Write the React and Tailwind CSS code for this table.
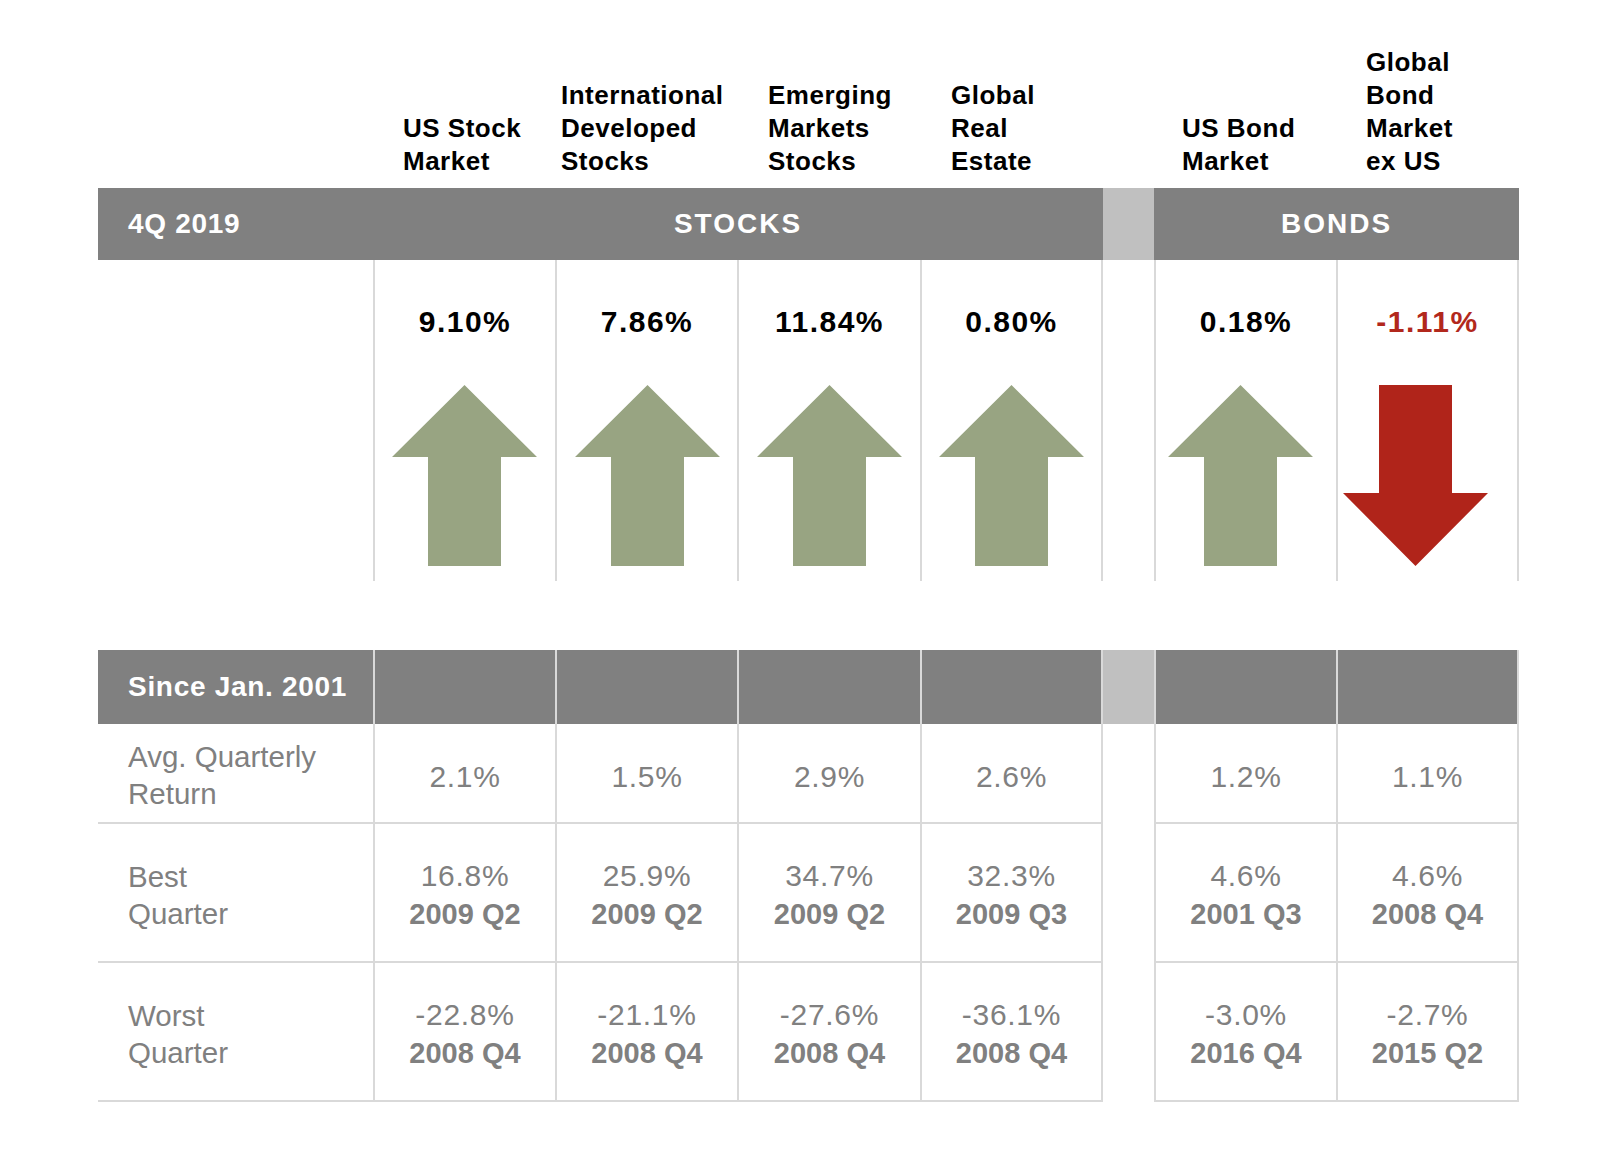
import React from 'react'

const GRID = 'grid grid-cols-[275px_182px_182px_183px_183px_51px_182px_183px]'
const LINE = 'border-[#d9d9d9]'

const columns = [
    { title: ['US Stock', 'Market'], pad: 'pl-[30px]', pct: '9.10%', up: true, shift: 'mr-[2px]', avg: '2.1%', best: ['16.8%', '2009 Q2'], worst: ['-22.8%', '2008 Q4'] },
    { title: ['International', 'Developed', 'Stocks'], pad: 'pl-[6px]', pct: '7.86%', up: true, shift: '', avg: '1.5%', best: ['25.9%', '2009 Q2'], worst: ['-21.1%', '2008 Q4'] },
    { title: ['Emerging', 'Markets', 'Stocks'], pad: 'pl-[31px]', pct: '11.84%', up: true, shift: '-mt-[1px]', avg: '2.9%', best: ['34.7%', '2009 Q2'], worst: ['-27.6%', '2008 Q4'] },
    { title: ['Global', 'Real', 'Estate'], pad: 'pl-[31px]', pct: '0.80%', up: true, shift: '', avg: '2.6%', best: ['32.3%', '2009 Q3'], worst: ['-36.1%', '2008 Q4'] },
    { title: ['US Bond', 'Market'], pad: 'pl-[28px]', pct: '0.18%', up: true, shift: 'mr-[12px]', avg: '1.2%', best: ['4.6%', '2001 Q3'], worst: ['-3.0%', '2016 Q4'] },
    { title: ['Global', 'Bond', 'Market', 'ex US'], pad: 'pl-[30px]', pct: '-1.11%', up: false, shift: 'mr-[24px]', avg: '1.1%', best: ['4.6%', '2008 Q4'], worst: ['-2.7%', '2015 Q2'] },
]

function UpArrow() {
    return (
        <svg width="145" height="181" viewBox="0 0 145 181">
            <polygon points="72.5,0 145,72 109,72 109,181 36,181 36,72 0,72" fill="#98a482" />
        </svg>
    )
}

function DownArrow() {
    return (
        <svg width="145" height="181" viewBox="0 0 145 181">
            <polygon points="36,0 109,0 109,108 145,108 72.5,181 0,108 36,108" fill="#b0241a" />
        </svg>
    )
}

// border classes per data column, stocks then bonds with gap in between
function edge(i) {
    if (i === 3 || i === 5) return `border-l-2 border-r-2 ${LINE}`
    return `border-l-2 ${LINE}`
}

function Gap({ className = '' }) {
    return <div className={className} />
}

function App() {
    const stocks = columns.slice(0, 4)
    const bonds = columns.slice(4)

    const renderCells = (render, gap) => (
        <>
            {stocks.map((c, i) => render(c, i))}
            {gap}
            {bonds.map((c, i) => render(c, i + 4))}
        </>
    )

    return (
        <div className="min-h-[1162px] bg-white font-[family-name:'Liberation_Sans',Arial,sans-serif]">
            <div className="ml-[98px] w-[1421px]">
                {/* column titles */}
                <div className={`${GRID} h-[188px]`}>
                    <div />
                    {renderCells(
                        (c, i) => (
                            <div key={i} className={`flex items-end pb-[10px] ${c.pad}`}>
                                <div className="text-[26px] leading-[33px] font-bold tracking-[0.5px] text-black">
                                    {c.title.map((t) => (
                                        <div key={t}>{t}</div>
                                    ))}
                                </div>
                            </div>
                        ),
                        <Gap />
                    )}
                </div>

                {/* 4Q 2019 bar */}
                <div className={`${GRID} h-[72px] text-white font-bold text-[28px]`}>
                    <div className="bg-[#808080] flex items-center pl-[30px] tracking-[0.7px]">4Q 2019</div>
                    <div className="col-span-4 bg-[#808080] flex items-center justify-center tracking-[2px]">STOCKS</div>
                    <div className="bg-[#c0c0c0]" />
                    <div className="col-span-2 bg-[#808080] flex items-center justify-center tracking-[2px]">BONDS</div>
                </div>

                {/* quarter returns with arrows */}
                <div className={`${GRID} h-[321px]`}>
                    <div />
                    {renderCells(
                        (c, i) => (
                            <div key={i} className={`flex flex-col items-center pt-[47px] ${edge(i)}`}>
                                <div className={`text-[30px] leading-[30px] font-bold tracking-[1.5px] ${c.up ? 'text-black' : 'text-[#b2281c]'}`}>
                                    {c.pct}
                                </div>
                                <div className={`mt-[48px] ${c.shift}`}>{c.up ? <UpArrow /> : <DownArrow />}</div>
                            </div>
                        ),
                        <Gap />
                    )}
                </div>

                <div className="h-[69px]" />

                {/* Since Jan. 2001 bar */}
                <div className={`${GRID} h-[74px] text-white font-bold text-[28px]`}>
                    <div className="bg-[#808080] flex items-center pl-[30px] tracking-[0.7px]">Since Jan. 2001</div>
                    {renderCells(
                        (c, i) => <div key={i} className={`bg-[#808080] ${edge(i)}`} />,
                        <Gap className="bg-[#c0c0c0]" />
                    )}
                </div>

                {/* avg quarterly */}
                <div className={`${GRID} h-[100px] text-[#808080]`}>
                    <div className={`flex flex-col justify-center pt-[3px] pl-[30px] text-[29.5px] leading-[37px] border-b-2 ${LINE}`}>
                        <div>Avg. Quarterly</div>
                        <div>Return</div>
                    </div>
                    {renderCells(
                        (c, i) => (
                            <div key={i} className={`flex items-center justify-center pt-[6px] text-[30px] tracking-[0.7px] border-b-2 ${edge(i)}`}>
                                {c.avg}
                            </div>
                        ),
                        <Gap />
                    )}
                </div>

                {/* best / worst */}
                {[
                    ['Best', 'best'],
                    ['Worst', 'worst'],
                ].map(([label, key]) => (
                    <div key={key} className={`${GRID} h-[139px] text-[#808080]`}>
                        <div className={`flex flex-col justify-center pt-[4px] pl-[30px] text-[29.5px] leading-[37px] border-b-2 ${LINE}`}>
                            <div>{label}</div>
                            <div>Quarter</div>
                        </div>
                        {renderCells(
                            (c, i) => (
                                <div key={i} className={`flex flex-col items-center justify-center pt-[4px] leading-[38px] border-b-2 ${edge(i)}`}>
                                    <div className="text-[30px] tracking-[0.7px]">{c[key][0]}</div>
                                    <div className="text-[29px] font-bold">{c[key][1]}</div>
                                </div>
                            ),
                            <Gap />
                        )}
                    </div>
                ))}
            </div>
        </div>
    )
}

export default App
